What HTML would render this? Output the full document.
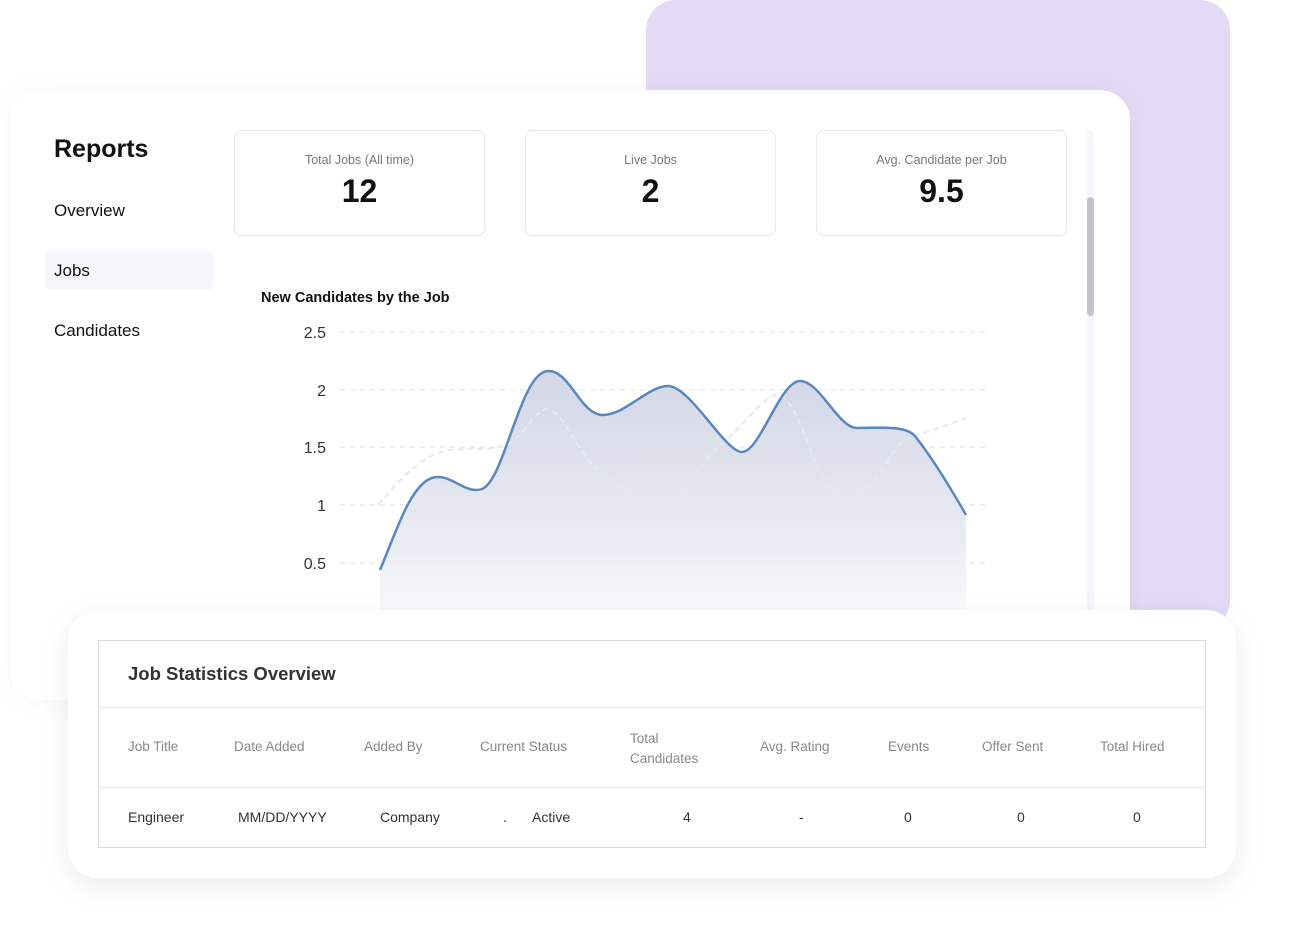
<!DOCTYPE html>
<html><head><meta charset="utf-8"><style>
*{margin:0;padding:0;box-sizing:border-box}
body{width:1300px;height:942px;background:#fff;position:relative;overflow:hidden;font-family:"Liberation Sans",sans-serif;color:#111}
.purple{position:absolute;left:646px;top:0;width:584px;height:630px;background:#e3daf5;border-radius:30px}
.main{position:absolute;left:10px;top:90px;width:1120px;height:610px;background:#fff;border-radius:30px;box-shadow:0 0 30px rgba(0,0,0,0.04)}
.abs{position:absolute}
.card{position:absolute;top:130px;width:251px;height:106px;border:1px solid #e6e6ea;border-radius:8px;background:#fff;text-align:center}
.card .l{margin-top:22px;font-size:12.5px;color:#777}
.card .v{margin-top:6px;font-size:32px;font-weight:bold;color:#111}
.bottom{position:absolute;left:68px;top:610px;width:1168px;height:268px;background:#fff;border-radius:30px;box-shadow:0 8px 30px rgba(0,0,0,0.08)}
.tbl{position:absolute;left:98px;top:640px;width:1108px;height:208px;border:1px solid #dcdce0}
.t{position:absolute;font-size:13.5px;color:#888}
.r{position:absolute;font-size:14px;color:#333}
</style></head><body>
<div class="purple"></div>
<div class="main"></div>
<div class="abs" style="left:54px;top:135px;font-size:25px;font-weight:bold">Reports</div>
<div class="abs" style="left:54px;top:201px;font-size:17px">Overview</div>
<div class="abs" style="left:45px;top:250px;width:168px;height:40px;background:#f6f7fd;border-radius:6px"></div>
<div class="abs" style="left:54px;top:261px;font-size:17px">Jobs</div>
<div class="abs" style="left:54px;top:321px;font-size:17px">Candidates</div>
<div class="card" style="left:234px"><div class="l">Total Jobs (All time)</div><div class="v">12</div></div>
<div class="card" style="left:525px"><div class="l">Live Jobs</div><div class="v">2</div></div>
<div class="card" style="left:816px"><div class="l">Avg. Candidate per Job</div><div class="v">9.5</div></div>
<div class="abs" style="left:1087px;top:130px;width:7px;height:480px;background:#f6f7fb;border-radius:4px"></div>
<div class="abs" style="left:1087px;top:197px;width:7px;height:119px;background:#c4c4c8;border-radius:4px"></div>
<div class="abs" style="left:261px;top:290px;font-size:14.5px;font-weight:bold">New Candidates by the Job</div>
<svg class="abs" style="left:0;top:0" width="1300" height="942">
<defs><linearGradient id="g" x1="0" y1="0" x2="0" y2="1"><stop offset="0" stop-color="#d2d6e6"/><stop offset="0.75" stop-color="#eceef5"/><stop offset="1" stop-color="#fafafc"/></linearGradient></defs>
<g font-family="Liberation Sans,sans-serif" font-size="16" fill="#333" text-anchor="end">
<text x="326" y="338">2.5</text><text x="326" y="396">2</text><text x="326" y="453">1.5</text><text x="326" y="511">1</text><text x="326" y="569">0.5</text></g>
<g stroke="#e2e2e6" stroke-dasharray="5 5" stroke-width="1"><line x1="340" y1="332" x2="985" y2="332"/><line x1="340" y1="390" x2="985" y2="390"/><line x1="340" y1="447" x2="985" y2="447"/><line x1="340" y1="505" x2="985" y2="505"/><line x1="340" y1="563" x2="985" y2="563"/></g>
<path d="M380,570 C395,535 410,485 432,478 C450,472 465,495 482,489 C505,480 520,372 548,371 C570,370 580,415 603,415 C625,415 648,386 668,386 C690,386 725,452 742,452 C760,452 780,381 800,381 C820,381 838,428 857,428 C880,428 905,425 915,436 C930,455 950,487 966,515 L966,610 L380,610 Z" fill="url(#g)"/>
<path d="M378,505 C400,480 420,455 450,450 C480,447 500,452 515,440 C530,425 540,405 550,410 C570,420 580,460 600,470 C625,480 635,520 655,517 C680,510 700,460 720,445 C740,430 760,400 775,395 C795,390 810,460 825,480 C840,500 850,500 860,495 C880,480 890,450 905,440 C930,430 950,425 966,418" fill="none" stroke="#e3e9f4" stroke-width="2" stroke-dasharray="6 4"/>
<path d="M380,570 C395,535 410,485 432,478 C450,472 465,495 482,489 C505,480 520,372 548,371 C570,370 580,415 603,415 C625,415 648,386 668,386 C690,386 725,452 742,452 C760,452 780,381 800,381 C820,381 838,428 857,428 C880,428 905,425 915,436 C930,455 950,487 966,515" fill="none" stroke="#5b87c0" stroke-width="2.5"/>
</svg>
<div class="bottom"></div>
<div class="tbl"></div>
<div class="abs" style="left:99px;top:707px;width:1106px;height:1px;background:#e6e6ea"></div>
<div class="abs" style="left:99px;top:787px;width:1106px;height:1px;background:#e6e6ea"></div>
<div class="abs" style="left:128px;top:663px;font-size:18.5px;font-weight:bold;color:#333">Job Statistics Overview</div>
<div class="t" style="left:128px;top:739px">Job Title</div>
<div class="t" style="left:234px;top:739px">Date Added</div>
<div class="t" style="left:364px;top:739px">Added By</div>
<div class="t" style="left:480px;top:739px">Current Status</div>
<div class="t" style="left:630px;top:729px;line-height:20px">Total<br>Candidates</div>
<div class="t" style="left:760px;top:739px">Avg. Rating</div>
<div class="t" style="left:888px;top:739px">Events</div>
<div class="t" style="left:982px;top:739px">Offer Sent</div>
<div class="t" style="left:1100px;top:739px">Total Hired</div>
<div class="r" style="left:128px;top:809px">Engineer</div>
<div class="r" style="left:238px;top:809px">MM/DD/YYYY</div>
<div class="r" style="left:380px;top:809px">Company</div>
<div class="r" style="left:503px;top:809px">.</div>
<div class="r" style="left:532px;top:809px">Active</div>
<div class="r" style="left:683px;top:809px">4</div>
<div class="r" style="left:799px;top:809px">-</div>
<div class="r" style="left:904px;top:809px">0</div>
<div class="r" style="left:1017px;top:809px">0</div>
<div class="r" style="left:1133px;top:809px">0</div>
</body></html>
